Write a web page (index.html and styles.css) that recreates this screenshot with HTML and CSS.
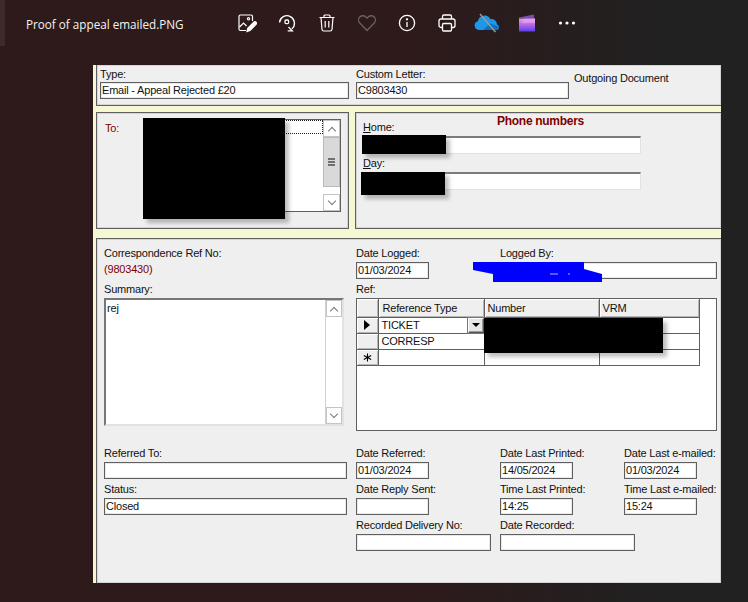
FILE: index.html
```html
<!DOCTYPE html>
<html lang="en">
<head>
  <meta charset="UTF-8" />
  <title>Proof of appeal emailed.PNG</title>
  <link rel="stylesheet" href="styles.css">
</head>
<body>

  <div class="side-tab"></div>

  <header class="toolbar">
    <div class="file-name">Proof of appeal emailed.PNG</div>
    <div class="tools">
      <!-- edit image -->
      <span class="tool">
        <svg width="20" height="20" viewBox="0 0 20 20" fill="none" stroke="#fff" stroke-width="1.2">
          <path d="M9 17.500H3.500a1.500 1.500 0 0 1-1.500-1.500V3.500A1.500 1.500 0 0 1 3.500 2H14a1.500 1.500 0 0 1 1.500 1.500V8"/>
          <path d="M2.500 14l4-4 3 3"/>
          <circle cx="11.500" cy="5.800" r="1.100"/>
          <path d="M10 18.500l.8-3.300 6-6a1.500 1.500 0 0 1 2.200 2.200l-6 6z" fill="#fff"/>
        </svg>
      </span>
      <!-- rotate -->
      <span class="tool">
        <svg width="20" height="20" viewBox="0 0 20 20" fill="none" stroke="#fff" stroke-width="1.300">
          <path d="M2.500 9.500a7.500 7.500 0 1 1 12.500 6.300"/>
          <path d="M10.500 14.500l3.800 3.800h-4.600" transform="translate(1 -.5)"/>
          <rect x="8" y="7" width="3.600" height="3.600" rx="1"/>
        </svg>
      </span>
      <!-- delete -->
      <span class="tool">
        <svg width="20" height="20" viewBox="0 0 20 20" fill="none" stroke="#fff" stroke-width="1.200">
          <path d="M2.500 4.500h15M7 4.500V3a1 1 0 0 1 1-1h4a1 1 0 0 1 1 1v1.500"/>
          <path d="M4 4.500l1 12a1.800 1.800 0 0 0 1.800 1.500h6.400a1.800 1.800 0 0 0 1.800-1.500l1-12"/>
          <path d="M8.200 8v6.500M11.800 8v6.500"/>
        </svg>
      </span>
      <!-- favourite -->
      <span class="tool">
        <svg width="20" height="20" viewBox="0 0 20 20" fill="none" stroke="#6b6060" stroke-width="1.300">
          <path d="M10 17.500L2.800 10a4.300 4.300 0 0 1 0-6 4.200 4.200 0 0 1 6 0l1.200 1.200L11.200 4a4.200 4.200 0 0 1 6 0 4.300 4.300 0 0 1 0 6z"/>
        </svg>
      </span>
      <!-- info -->
      <span class="tool">
        <svg width="20" height="20" viewBox="0 0 20 20" fill="none" stroke="#fff" stroke-width="1.300">
          <circle cx="10" cy="10" r="7.600"/>
          <path d="M10 9v5"/>
          <circle cx="10" cy="6.300" r=".5" fill="#fff"/>
        </svg>
      </span>
      <!-- print -->
      <span class="tool">
        <svg width="20" height="20" viewBox="0 0 20 20" fill="none" stroke="#fff" stroke-width="1.300">
          <path d="M5.500 6V3.500a1.500 1.500 0 0 1 1.500-1.500h6a1.500 1.500 0 0 1 1.500 1.500V6"/>
          <path d="M5.500 14.500H4a2 2 0 0 1-2-2V8a2 2 0 0 1 2-2h12a2 2 0 0 1 2 2v4.500a2 2 0 0 1-2 2h-1.500"/>
          <rect x="5.500" y="10.500" width="9" height="7.500" rx="1.200"/>
        </svg>
      </span>
      <!-- onedrive off -->
      <span class="tool">
        <svg class="cloud" width="26" height="20" viewBox="0 0 26 20">
          <path d="M5 17a4.500 4.500 0 0 1-1.200-8.800 6.800 6.800 0 0 1 12.700-2 5.500 5.500 0 0 1 6.500 5.200 3 3 0 0 1 2 2.800 3 3 0 0 1-3 2.800z" fill="#1d97e8"/>
          <path d="M9 17l7.500-6.500 8 3.300a3 3 0 0 1-2.500 3.200z" fill="#0b6fc2"/>
          <path d="M6 1l15.500 18" stroke="#9a9a9a" stroke-width="1.500"/>
        </svg>
      </span>
      <!-- clipchamp -->
      <span class="tool">
        <svg width="16" height="18" viewBox="0 0 16 18">
          <defs>
            <linearGradient id="clip" x1="0" y1="0" x2="0" y2="1">
              <stop offset="0" stop-color="#e79bf0"/>
              <stop offset=".5" stop-color="#b267e8"/>
              <stop offset="1" stop-color="#5a3df0"/>
            </linearGradient>
          </defs>
          <path d="M0 3.500L15 .5v3.500H0z" fill="#7a4bc0"/>
          <rect x="0" y="4.500" width="16" height="13" fill="url(#clip)"/>
          <path d="M5 4.500h11v4.500H3z" fill="#e9a6f2" opacity=".6"/>
        </svg>
      </span>
      <!-- more -->
      <span class="tool">
        <svg width="18" height="4" viewBox="0 0 18 4" fill="#fff">
          <circle cx="2.500" cy="2" r="1.600"/>
          <circle cx="9" cy="2" r="1.600"/>
          <circle cx="15.500" cy="2" r="1.600"/>
        </svg>
      </span>
    </div>
  </header>

  <main class="shot">

    <section class="panel panel-top">
      <div class="field type-field">
        <label>Type:</label>
        <input type="text" class="input" value="Email - Appeal Rejected £20" readonly>
      </div>
      <div class="field letter-field">
        <label>Custom Letter:</label>
        <input type="text" class="input" value="C9803430" readonly>
      </div>
      <div class="doc-kind">Outgoing Document</div>
    </section>

    <div class="middle">
      <section class="panel panel-to">
        <span class="red-label">To:</span>
        <div class="listbox">
          <div class="list-items"><div class="list-focus"></div></div>
          <div class="scrollbar">
            <span class="scroll-btn"><span class="chevron up"></span></span>
            <span class="scroll-thumb"><span class="grip"></span></span>
            <span class="scroll-track"></span>
            <span class="scroll-btn"><span class="chevron down"></span></span>
          </div>
        </div>
      </section>

      <section class="panel panel-phone">
        <div class="phone-title">Phone numbers</div>
        <label><u>H</u>ome:</label>
        <input type="text" class="input sunken" readonly>
        <label><u>D</u>ay:</label>
        <input type="text" class="input sunken" readonly>
      </section>
    </div>

    <section class="panel panel-main">
      <div class="upper">
        <div class="upper-left">
          <label>Correspondence Ref No:</label>
          <div class="ref-no">(9803430)</div>
          <label>Summary:</label>
          <div class="memo">
            <div class="memo-text">rej</div>
            <div class="scrollbar plain">
              <span class="scroll-btn"><span class="chevron up"></span></span>
              <span class="scroll-track"></span>
              <span class="scroll-btn"><span class="chevron down"></span></span>
            </div>
          </div>
        </div>

        <div class="upper-right">
          <div class="logged-row">
            <div class="field date-col">
              <label>Date Logged:</label>
              <input type="text" class="input short" value="01/03/2024" readonly>
            </div>
            <div class="field logged-by">
              <label>Logged By:</label>
              <input type="text" class="input" readonly>
            </div>
          </div>
          <label>Ref:</label>
          <div class="ref-grid">
            <table>
              <tr>
                <th class="marker"></th>
                <th>Reference Type</th>
                <th>Number</th>
                <th>VRM</th>
              </tr>
              <tr>
                <td class="marker"><span class="arrow"></span></td>
                <td class="combo">TICKET<span class="combo-btn"><span class="arrow-down"></span></span></td>
                <td></td>
                <td></td>
              </tr>
              <tr>
                <td class="marker"></td>
                <td>CORRESP</td>
                <td></td>
                <td></td>
              </tr>
              <tr>
                <td class="marker">
                  <svg class="new-row" width="9" height="9" viewBox="0 0 11 11" stroke="#000" stroke-width="1.300">
                    <path d="M5.500 .5v10M1 3l9 5M10 3L1 8"/>
                  </svg>
                </td>
                <td></td>
                <td></td>
                <td></td>
              </tr>
            </table>
          </div>
        </div>
      </div>

      <div class="lower">
        <div class="field">
          <label>Referred To:</label>
          <input type="text" class="input" readonly>
        </div>
        <div class="field">
          <label>Date Referred:</label>
          <input type="text" class="input short" value="01/03/2024" readonly>
        </div>
        <div class="field">
          <label>Date Last Printed:</label>
          <input type="text" class="input short" value="14/05/2024" readonly>
        </div>
        <div class="field">
          <label>Date Last e-mailed:</label>
          <input type="text" class="input short" value="01/03/2024" readonly>
        </div>

        <div class="field">
          <label>Status:</label>
          <input type="text" class="input" value="Closed" readonly>
        </div>
        <div class="field">
          <label>Date Reply Sent:</label>
          <input type="text" class="input short" readonly>
        </div>
        <div class="field">
          <label>Time Last Printed:</label>
          <input type="text" class="input short" value="14:25" readonly>
        </div>
        <div class="field">
          <label>Time Last e-mailed:</label>
          <input type="text" class="input short" value="15:24" readonly>
        </div>

        <div class="field delivery">
          <label>Recorded Delivery No:</label>
          <input type="text" class="input wide" readonly>
        </div>
        <div class="field recorded">
          <label>Date Recorded:</label>
          <input type="text" class="input wide" readonly>
        </div>
      </div>
    </section>

    <!-- redactions drawn on top of the screenshot -->
    <div class="redact redact-to"></div>
    <div class="redact redact-home"></div>
    <div class="redact redact-day"></div>
    <div class="redact redact-number"></div>
    <svg class="scribble" width="130" height="21" viewBox="0 0 130 21">
      <path d="M0 0H111V7L129 12V20H20V12L0 8z" fill="#0000ff"/>
      <path d="M77 12h8M95 12h2" stroke="#fff" stroke-width=".7"/>
    </svg>
  </main>

</body>
</html>
```

FILE: styles.css
```css
* {
  box-sizing: border-box;
}

body {
  margin: 0;
  width: 748px;
  height: 602px;
  overflow: hidden;
  position: relative;
  background: linear-gradient(90deg, #2e1a1b 0%, #2e1a1b 55%, #222020 85%, #212121 100%);
  font-family: "Liberation Sans", Arial, sans-serif;
  font-size: 11px;
  letter-spacing: -0.2px;
  color: #111;
}

.side-tab {
  position: absolute;
  left: 0;
  top: 0;
  width: 5px;
  height: 46px;
  background: #3d2a2b;
}

/* top bar */
.toolbar {
  height: 65px;
  display: flex;
  align-items: flex-start;
  padding: 13px 0 0 26px;
}

.file-name {
  width: 201px;
  font-family: "Open Sans", sans-serif;
  font-size: 11.7px;
  letter-spacing: 0;
  line-height: 22px;
  color: #f2f2f2;
}

.tools {
  display: flex;
}

.tool {
  width: 40px;
  height: 20px;
  display: flex;
  align-items: center;
  justify-content: center;
}

/* the form picture */
.shot {
  position: relative;
  width: 628px;
  height: 518px;
  margin-left: 93px;
  padding-left: 3px;
  background: #f5f8d2;
  display: flex;
  flex-direction: column;
}

.panel {
  background: #efefef;
  border: 1px solid #5f5f5f;
  box-shadow: inset 0 0 0 1px rgba(110, 110, 110, 0.2);
}

label {
  display: block;
  height: 18px;
  line-height: 18px;
  white-space: nowrap;
}

.input {
  display: block;
  width: 100%;
  height: 17px;
  margin: 0 0 1px;
  padding: 0 1px 1px;
  border: 1px solid #5f5f5f;
  box-shadow: inset 0 0 0 1px rgba(110, 110, 110, 0.15);
  background: #fff;
  font: inherit;
  letter-spacing: inherit;
  color: #111;
  outline: none;
}

.input.short {
  width: 73px;
}

.input.wide {
  width: 135px;
}

.input.sunken {
  width: 279px;
  height: 18px;
  margin: 0;
  box-shadow: none;
  border: 1px solid #e2e2e2;
  border-top: 2px solid #7c7c7c;
  border-left-color: #8c8c8c;
}

.panel-top {
  height: 41px;
  display: flex;
  padding-left: 3px;
  border-top: none;
  border-right: none;
}

.panel-top label {
  height: 17px;
}

.type-field {
  width: 249px;
}

.letter-field {
  width: 213px;
  margin-left: 7px;
}

.doc-kind {
  margin: 6px 0 0 5px;
  line-height: 14px;
}

.middle {
  display: flex;
  gap: 6px;
  height: 117px;
  margin-top: 6px;
}

.panel-to {
  width: 253px;
  display: flex;
  justify-content: space-between;
  padding: 6px 7px 0 8px;
}

.red-label {
  color: #800000;
  line-height: 18px;
}

.listbox {
  width: 198px;
  height: 93px;
  display: flex;
  background: #fff;
  border: 1px solid #5f5f5f;
}

.list-items {
  flex: 1;
}

.list-focus {
  height: 14px;
  border: 1px dotted #222;
}

.scrollbar {
  width: 17px;
  display: flex;
  flex-direction: column;
  background: #fff;
}

.scroll-btn {
  height: 17px;
  display: flex;
  align-items: center;
  justify-content: center;
  border: 1px solid #c4c4c4;
  background: #fff;
}

.scroll-thumb {
  height: 50px;
  display: flex;
  align-items: center;
  justify-content: center;
  background: #d9d9d9;
  border: 1px solid #b9b9b9;
}

.scroll-track {
  flex: 1;
}

.grip {
  width: 7px;
  height: 8px;
  background: repeating-linear-gradient(#707070 0 2px, transparent 2px 3px);
}

.chevron {
  width: 6px;
  height: 6px;
  border-left: 1px solid #777;
  border-top: 1px solid #777;
}

.chevron.up {
  transform: translateY(2px) rotate(45deg);
}

.chevron.down {
  transform: translateY(-2px) rotate(225deg);
}

.panel-phone {
  flex: 1;
  padding: 1px 0 0 6px;
  border-right: none;
}

.phone-title {
  height: 15px;
  margin-bottom: -11px;
  padding-right: 2px;
  color: #800000;
  font-size: 12px;
  font-weight: bold;
  letter-spacing: -0.3px;
  line-height: 15px;
  text-align: center;
}

.panel-phone label {
  padding-left: 1px;
}

.panel-main {
  flex: 1;
  margin-top: 9px;
  padding: 5px 0 0 7px;
  border-right: none;
  border-bottom: none;
}

.upper {
  display: flex;
  height: 187px;
}

.upper-left {
  width: 252px;
}

.ref-no {
  height: 18px;
  color: #800000;
  line-height: 15px;
}

.memo {
  width: 240px;
  height: 128px;
  display: flex;
  background: #fff;
  border: 2px solid #e2e2e2;
  border-top-color: #777;
  border-left-color: #777;
}

.memo-text {
  flex: 1;
  padding: 2px 1px;
}

.scrollbar.plain {
  border-left: 1px solid #d0d0d0;
}

.upper-right {
  width: 361px;
}

.logged-row {
  display: flex;
}

.date-col {
  width: 144px;
}

.logged-by {
  flex: 1;
}

.ref-grid {
  height: 133px;
  background: #fff;
  border: 1px solid #5f5f5f;
}

.ref-grid table {
  width: 342px;
  table-layout: fixed;
  border-collapse: collapse;
}

.ref-grid th,
.ref-grid td {
  padding: 0 3px;
  height: 16px;
  border-right: 1px solid #5f5f5f;
  border-bottom: 1px solid #5f5f5f;
  font-weight: normal;
  text-align: left;
  line-height: 14px;
}

.ref-grid th {
  height: 18px;
  background: #efefef;
  box-shadow: inset 1px 1px 0 #fff, inset -1px -1px 0 #b5b5b5;
}

.ref-grid th:nth-child(2) {
  width: 106px;
  padding-left: 4px;
}

.ref-grid th:nth-child(3) {
  width: 115px;
}

.ref-grid th:nth-child(4) {
  width: 100px;
}

.ref-grid .marker {
  width: 21px;
  padding: 0;
  background: #efefef;
  box-shadow: inset 1px 1px 0 #fff, inset -1px -1px 0 #b5b5b5;
  text-align: center;
  line-height: 0;
}

.new-row {
  display: block;
  margin: 0 auto;
}

.arrow {
  display: inline-block;
  border-left: 6px solid #000;
  border-top: 5px solid transparent;
  border-bottom: 5px solid transparent;
}

.ref-grid .combo {
  position: relative;
}

.combo-btn {
  position: absolute;
  right: 0;
  top: 0;
  width: 16px;
  height: 15px;
  display: flex;
  align-items: center;
  justify-content: center;
  background: #e6e6e6;
  border: 1px solid #555;
  border-top-color: #fff;
  border-left-color: #fff;
  box-shadow: inset -1px -1px 0 #999, 0 0 0 1px #777;
}

.arrow-down {
  border-top: 4px solid #000;
  border-left: 4px solid transparent;
  border-right: 4px solid transparent;
}

.lower {
  display: grid;
  grid-template-columns: 243px 135px 115px 73px;
  column-gap: 9px;
  grid-auto-rows: 36px;
  margin-top: 13px;
}

.delivery {
  grid-column: 2;
}

.recorded {
  grid-column: 3 / span 2;
}

/* redactions */
.redact {
  position: absolute;
  background: #000;
  box-shadow: 4px 4px 4px rgba(0, 0, 0, 0.25);
}

.redact-to {
  left: 50px;
  top: 53px;
  width: 142px;
  height: 101px;
}

.redact-home {
  left: 269px;
  top: 70px;
  width: 84px;
  height: 19px;
}

.redact-day {
  left: 268px;
  top: 107px;
  width: 84px;
  height: 23px;
}

.redact-number {
  left: 391px;
  top: 253px;
  width: 179px;
  height: 35px;
}

.scribble {
  position: absolute;
  left: 380px;
  top: 197px;
}
```
